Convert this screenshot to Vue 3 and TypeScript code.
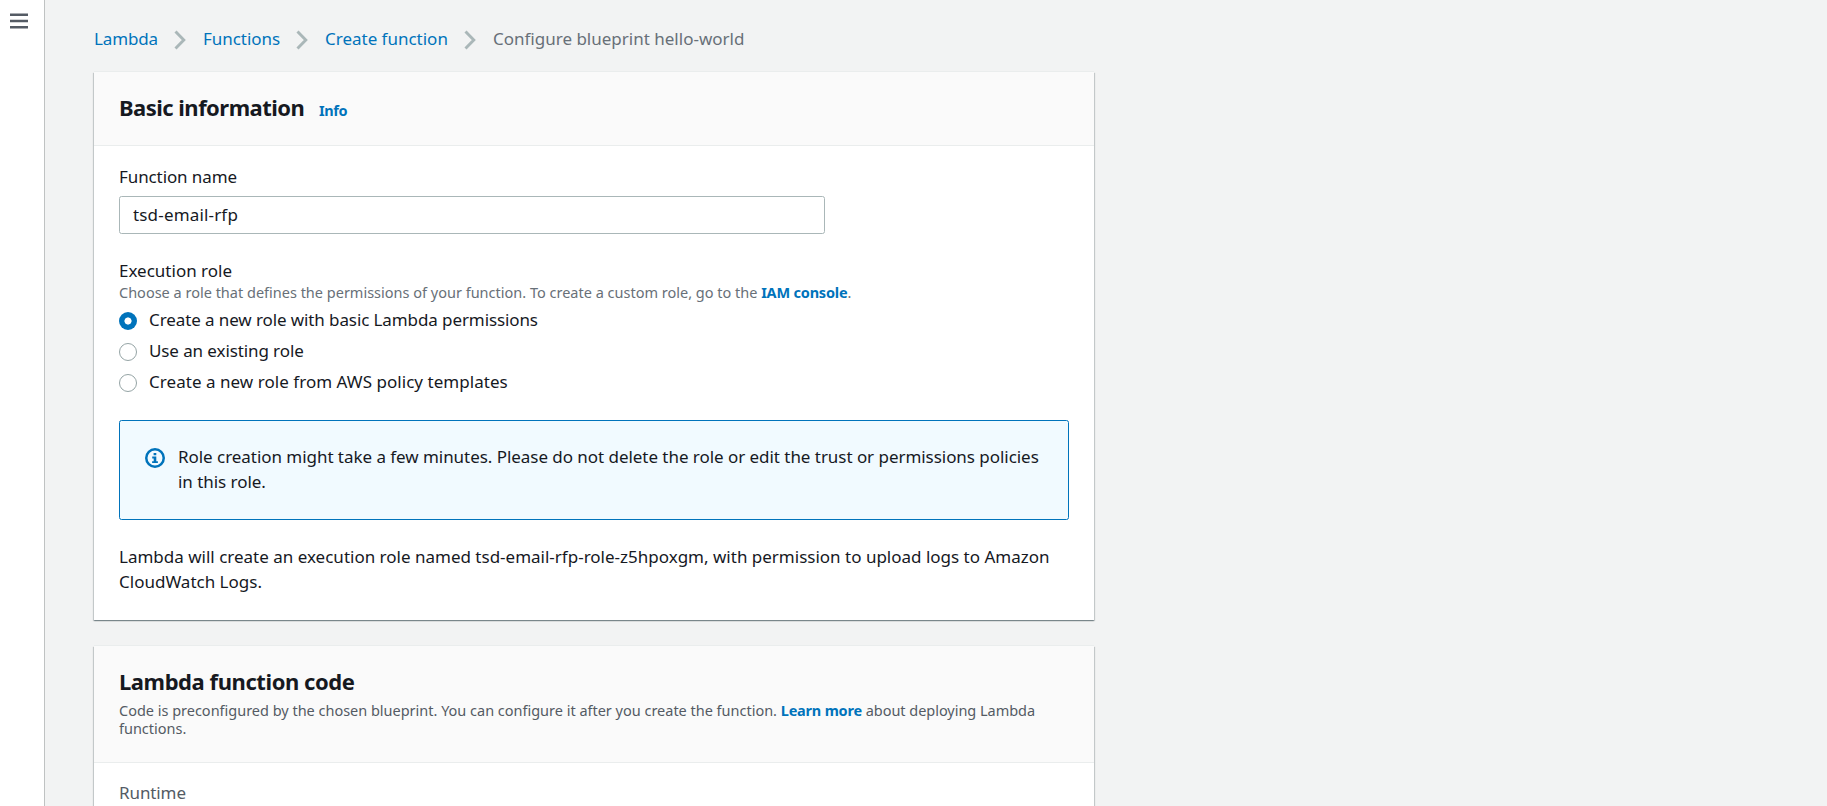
<script setup lang="ts">
import { ref } from 'vue'

interface Crumb {
  label: string
  tone: string
}
interface RoleOption {
  id: string
  label: string
  tone: string
}

const crumbs: Crumb[] = [
  { label: 'Lambda', tone: 'c-lambda' },
  { label: 'Functions', tone: 'c-functions' },
  { label: 'Create function', tone: 'c-create' },
]
const roles: RoleOption[] = [
  { id: 'basic', label: 'Create a new role with basic Lambda permissions', tone: 'r-basic' },
  { id: 'existing', label: 'Use an existing role', tone: 'r-existing' },
  { id: 'template', label: 'Create a new role from AWS policy templates', tone: 'r-template' },
]
const functionName = ref('tsd-email-rfp')
const selectedRole = ref('basic')
</script>

<template>
  <div class="shell">
    <aside class="rail">
      <svg class="menu" width="18" height="16" viewBox="0 0 18 16" aria-hidden="true">
        <path d="M0 1.7h18M0 8h18M0 14.2h18" />
      </svg>
    </aside>
    <main class="content">
      <nav class="crumbs">
        <template v-for="c in crumbs" :key="c.label">
          <a class="crumb" :class="c.tone">{{ c.label }}</a>
          <svg class="chevron" width="12" height="20" viewBox="0 0 12 20" aria-hidden="true">
            <path d="M1.5 1.5 9.8 10 1.5 18.5" />
          </svg>
        </template>
        <span class="current">Configure blueprint hello-world</span>
      </nav>

      <section class="card">
        <header class="head">
          <h2 class="title basic">Basic information</h2>
          <a class="link info">Info</a>
        </header>
        <div class="body">
          <label class="label fn" for="fn">Function name</label>
          <input id="fn" v-model="functionName" class="input" type="text" spellcheck="false" />
          <div class="label">Execution role</div>
          <p class="hint"><span>Choose a role that defines the permissions of your function. To create a custom role, go to the </span><a class="link iam">IAM console</a>.</p>
          <div class="roles">
            <label v-for="r in roles" :key="r.id" class="role" :class="r.tone" @click="selectedRole = r.id">
              <span class="dot" :class="{ on: selectedRole === r.id }"></span>
              <span>{{ r.label }}</span>
            </label>
          </div>
          <div class="alert">
            <svg class="info-icon" width="20" height="20" viewBox="0 0 20 20" aria-hidden="true">
              <circle cx="10" cy="10" r="8.75" />
              <path d="M8.6 4.9h2.7v2.4H8.6zM7.2 8.6h4.1v4.6h1.6v1.9H7.1v-1.9h1.6v-2.7H7.2z" />
            </svg>
            <p>Role creation might take a few minutes. Please do not delete the role or edit the trust or permissions policies<br />in this role.</p>
          </div>
          <p class="note">Lambda will create an execution role named tsd-email-rfp-role-z5hpoxgm, with permission to upload logs to Amazon<br />CloudWatch Logs.</p>
        </div>
      </section>

      <section class="card">
        <header class="head stacked">
          <h2 class="title code">Lambda function code</h2>
          <p class="desc">Code is preconfigured by the chosen blueprint. You can configure it after you create the function. <a class="link learn">Learn more</a><span class="about"> about deploying Lambda</span><br />functions.</p>
        </header>
        <div class="body tight">
          <div class="runtime">Runtime</div>
        </div>
      </section>
    </main>
  </div>
</template>

<style>
body {
  overflow: hidden;
}
</style>

<style scoped>
.shell {
  display: flex;
  height: 806px;
  overflow: hidden;
  background: #f2f3f3;
  color: #16191f;
  font: 17px/25px "Noto Sans", "Open Sans", sans-serif;
}
p,
h2 {
  margin: 0;
}
.rail {
  flex: none;
  box-sizing: border-box;
  width: 45px;
  padding: 13px 0 0 10px;
  background: #fff;
  border-right: 1px solid #bfc2c2;
}
.menu {
  display: block;
}
.menu path {
  stroke: #545b64;
  stroke-width: 2.5;
}
.content {
  width: 1000px;
  padding: 26px 0 0 49px;
}
.crumbs {
  display: flex;
  height: 25px;
  margin-bottom: 21px;
  white-space: nowrap;
}
.crumb {
  color: #0073bb;
}
.c-lambda {
  width: 80px;
  letter-spacing: -0.15px;
}
.c-functions {
  width: 93px;
  letter-spacing: -0.03px;
}
.c-create {
  width: 139px;
  letter-spacing: -0.01px;
}
.chevron {
  margin: 4px 17px 0 0;
}
.chevron path {
  fill: none;
  stroke: #aab7b8;
  stroke-width: 2.9;
}
.current {
  color: #687078;
}
.card {
  width: 1000px;
  margin-bottom: 26px;
  background: #fff;
  box-shadow: 0 1px 1px 0 rgba(0, 28, 36, 0.3), 1px 1px 1px 0 rgba(0, 28, 36, 0.15),
    -1px 1px 1px 0 rgba(0, 28, 36, 0.15), 0 -1px 0 0 #eaeded;
}
.head {
  display: flex;
  align-items: baseline;
  box-sizing: border-box;
  height: 74px;
  padding: 20px 25px 0;
  background: #fafafa;
  border-bottom: 1px solid #eaeded;
}
.stacked {
  display: block;
  height: 117px;
}
.title {
  font-size: 22px;
  font-weight: 700;
  line-height: 30px;
}
.basic {
  width: 200px;
  letter-spacing: -0.53px;
}
.code {
  letter-spacing: -0.43px;
}
.link {
  color: #0073bb;
  font-weight: 700;
}
.info {
  font-size: 14.5px;
  letter-spacing: -0.4px;
}
.iam {
  letter-spacing: -0.2px;
}
.learn {
  letter-spacing: -0.2px;
}
.about {
  letter-spacing: -0.03px;
}
.body {
  padding: 18px 25px 26px;
}
.tight {
  padding-top: 17px;
}
.label {
  display: block;
}
.fn {
  letter-spacing: -0.1px;
}
.input {
  display: block;
  box-sizing: border-box;
  width: 706px;
  height: 38px;
  margin: 7px 0 24px;
  padding: 0 13px 2px;
  border: 1px solid #aab7b8;
  border-radius: 2.5px;
  outline: none;
  background: #fff;
  color: inherit;
  font: inherit;
  letter-spacing: 0.17px;
}
.hint {
  color: #687078;
  font-size: 14.5px;
  line-height: 18px;
  white-space: nowrap;
}
.roles {
  display: grid;
  grid-auto-rows: 31px;
  margin-top: 6px;
}
.role {
  display: flex;
  gap: 12px;
}
.r-basic {
  letter-spacing: -0.1px;
}
.r-existing {
  letter-spacing: -0.1px;
}
.r-template {
  letter-spacing: 0.04px;
}
.dot {
  flex: none;
  box-sizing: border-box;
  width: 18px;
  height: 18px;
  margin-top: 5px;
  border: 1px solid #95a4a5;
  border-radius: 50%;
  background: #fff;
}
.dot.on {
  border: 0;
  background: radial-gradient(circle, #fff 3.2px, #0073bb 3.9px);
}
.alert {
  display: flex;
  gap: 13px;
  box-sizing: border-box;
  width: 950px;
  height: 100px;
  margin: 20px 0 24px;
  padding: 23px 0 0 25px;
  border: 1px solid #0073bb;
  border-radius: 2.5px;
  background: #f1faff;
  letter-spacing: -0.045px;
  white-space: nowrap;
}
.info-icon {
  flex: none;
  margin-top: 4px;
}
.info-icon circle {
  fill: none;
  stroke: #0073bb;
  stroke-width: 2.5;
}
.info-icon path {
  fill: #0073bb;
}
.note {
  white-space: nowrap;
}
.desc {
  color: #545b64;
  font-size: 14.5px;
  line-height: 18px;
  margin-top: 5px;
  letter-spacing: -0.012px;
  white-space: nowrap;
}
.runtime {
  color: #545b64;
  letter-spacing: -0.1px;
}
</style>
